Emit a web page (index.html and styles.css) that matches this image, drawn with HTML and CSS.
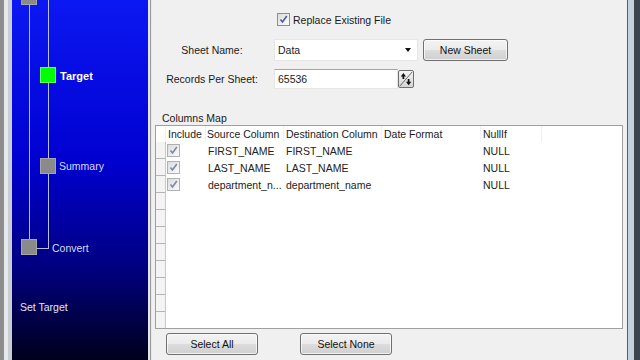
FILE: index.html
```html
<!DOCTYPE html>
<html lang="en">
<head>
  <meta charset="UTF-8" />
  <title>Export Wizard – Set Target</title>
  <link rel="stylesheet" href="styles.css">
</head>
<body>

  <div class="frame-left"></div>

  <!-- WIZARD STEPS -->
  <aside class="steps">
    <div class="line line-a"></div>
    <div class="line line-b"></div>
    <div class="line line-c"></div>
    <div class="step-box box-top"></div>
    <div class="step-box box-target current"></div>
    <div class="step-box box-summary"></div>
    <div class="step-box box-convert"></div>
    <span class="step-label lbl-target">Target</span>
    <span class="step-label lbl-summary">Summary</span>
    <span class="step-label lbl-convert">Convert</span>
    <span class="step-title">Set Target</span>
  </aside>

  <div class="splitter"></div>

  <main class="content">
    <div class="form">
      <div></div>
      <label class="check-row">
        <span class="chk"><svg viewBox="0 0 9 9"><path d="M1.5 4.5 L3.5 7 L7.8 1" /></svg></span>
        Replace Existing File
      </label>

      <span class="lbl">Sheet Name:</span>
      <div class="field-row">
        <div class="combo">Data<span class="arrow"></span></div>
        <button class="btn btn-sheet">New Sheet</button>
      </div>

      <span class="lbl">Records Per Sheet:</span>
      <div class="field-row">
        <div class="input">65536</div>
        <span class="spin">
          <svg viewBox="0 0 16 18">
            <path class="diag" d="M1 17 L15 1" />
            <path class="ar" d="M5 2 L8 6 L6 6 L6 9 L4 9 L4 6 L2 6 Z" />
            <path class="ar" d="M11 16 L8 12 L10 12 L10 9 L12 9 L12 12 L14 12 Z" />
          </svg>
        </span>
      </div>
    </div>

    <div class="map-title">Columns Map</div>
    <div class="grid">
      <div class="grid-head">
        <span class="c-gap"></span>
        <span class="c-inc">Include</span>
        <span class="c-src">Source Column</span>
        <span class="c-dst">Destination Column</span>
        <span class="c-fmt">Date Format</span>
        <span class="c-nul">NullIf</span>
        <span class="c-rest"></span>
      </div>
      <div class="grid-body">
        <div class="row-heads"></div>
        <div class="rows">
          <div class="row">
            <span class="c-inc"><span class="chk dim"><svg viewBox="0 0 9 9"><path d="M1.5 4.5 L3.5 7 L7.8 1" /></svg></span></span>
            <span class="c-src">FIRST_NAME</span>
            <span class="c-dst">FIRST_NAME</span>
            <span class="c-fmt"></span>
            <span class="c-nul">NULL</span>
          </div>
          <div class="row">
            <span class="c-inc"><span class="chk dim"><svg viewBox="0 0 9 9"><path d="M1.5 4.5 L3.5 7 L7.8 1" /></svg></span></span>
            <span class="c-src">LAST_NAME</span>
            <span class="c-dst">LAST_NAME</span>
            <span class="c-fmt"></span>
            <span class="c-nul">NULL</span>
          </div>
          <div class="row">
            <span class="c-inc"><span class="chk dim"><svg viewBox="0 0 9 9"><path d="M1.5 4.5 L3.5 7 L7.8 1" /></svg></span></span>
            <span class="c-src">department_n...</span>
            <span class="c-dst">department_name</span>
            <span class="c-fmt"></span>
            <span class="c-nul">NULL</span>
          </div>
        </div>
      </div>
    </div>

    <div class="actions">
      <button class="btn btn-wide">Select All</button>
      <button class="btn btn-wide">Select None</button>
    </div>
  </main>

  <div class="frame-right"></div>

</body>
</html>
```

FILE: styles.css
```css
/* RESET & GLOBAL */
* { margin: 0; padding: 0; box-sizing: border-box; }
body {
  width: 640px; height: 360px;
  display: flex;
  overflow: hidden;
  background: #f0f0f0;
  font-family: 'Liberation Sans', Arial, sans-serif;
  font-size: 10.5px;
  color: #1a1a1a;
}

/* WINDOW FRAME */
.frame-left {
  width: 12px; flex: none;
  background: linear-gradient(90deg, #8d8d8d 0 4px, #e6e9ec 4px 8px, #c9ced3 8px);
}
.frame-right {
  width: 13px; flex: none;
  background: linear-gradient(90deg, #5c5c5c 0 1px, #c3d3de 1px 7px, #3b4550 7px);
}
.splitter {
  width: 4px; flex: none;
  background: linear-gradient(90deg, #e4e6ee 0 2px, #9a9a9a 2px 3px, #e8e8e8 3px);
}

/* WIZARD STEPS (diagram) */
.steps {
  width: 136px; flex: none;
  position: relative;
  background: linear-gradient(180deg, #0c18f2 0%, #0000d0 45%, #00007e 75%, #00001c 100%);
  color: #fff;
}
.line { position: absolute; background: #b8bed8; }
.line-a { left: 17px; top: 0; width: 1px; height: 240px; }
.line-b { left: 36px; top: 0; width: 1px; height: 249px; }
.line-c { left: 24px; top: 248px; width: 13px; height: 1px; }
.step-box {
  position: absolute;
  width: 16px; height: 16px;
  background: #8a8a8a;
  border: 1px solid #a6a6a6;
}
.step-box.current { background: #00ff00; border-color: #66ff66; }
.box-top { left: 9px; top: -11px; }
.box-target { left: 28px; top: 67px; }
.box-summary { left: 28px; top: 158px; }
.box-convert { left: 9px; top: 239px; }
.step-label, .step-title {
  position: absolute;
  line-height: 12px;
  font-size: 10.5px;
  color: #d8dcf4;
}
.lbl-target { left: 48px; top: 70px; font-weight: bold; color: #fff; font-size: 11px; }
.lbl-summary { left: 47px; top: 160px; }
.lbl-convert { left: 40px; top: 242px; }
.step-title { left: 8px; top: 301px; color: #e4e6f0; }

/* CONTENT */
.content {
  flex: 1;
  padding: 13px 4px 0 3px;
  display: flex; flex-direction: column;
}
.form {
  display: grid;
  grid-template-columns: 94px 1fr;
  column-gap: 15px;
  padding-left: 10px;
  align-items: center;
}
.check-row {
  display: flex; align-items: center; gap: 3px;
  height: 13px;
  padding-left: 3px;
  margin-bottom: 13px;
}
.lbl { text-align: center; white-space: nowrap; }
.field-row { display: flex; align-items: center; gap: 5px; }
.form .field-row + .lbl, .form .field-row:last-child { margin-top: 8px; }

.chk {
  width: 13px; height: 13px; flex: none;
  border: 1px solid #8e8f8f;
  background: linear-gradient(135deg, #dcdcdc, #fbfbfb);
  display: inline-flex; align-items: center; justify-content: center;
}
.chk svg { width: 9px; height: 9px; }
.chk path { fill: none; stroke: #4a5f97; stroke-width: 1.6; }
.chk.dim { border-color: #b0b0b0; }
.chk.dim path { stroke: #7d87a8; }

.combo {
  width: 144px; height: 22px;
  background: #fff;
  border: 1px solid #e6e6e6;
  padding-left: 3px;
  display: flex; align-items: center; justify-content: space-between;
}
.arrow {
  width: 0; height: 0; margin-right: 6px;
  border-left: 3.5px solid transparent;
  border-right: 3.5px solid transparent;
  border-top: 4px solid #111;
}
.input {
  width: 124px; height: 20px;
  background: #fff;
  border: 1px solid #e6e6e6;
  border-top-color: #a4a4a4;
  padding-left: 3px;
  display: flex; align-items: center;
}
.spin {
  width: 16px; height: 18px; margin-left: -5px;
  border: 1px solid #6f6f6f; border-radius: 2px;
  background: linear-gradient(180deg, #f4f4f4, #d6d6d6);
}
.spin svg { width: 14px; height: 16px; display: block; }
.spin .diag { stroke: #555; stroke-width: 1; fill: none; }
.spin .ar { fill: #111; }

.btn {
  font: inherit; color: #111;
  height: 22px;
  border: 1px solid #707070; border-radius: 3px;
  background: linear-gradient(180deg, #f3f3f3 0%, #ebebeb 50%, #dddddd 51%, #cfcfcf 100%);
  box-shadow: inset 0 0 0 1px rgba(255,255,255,0.7);
}
.btn-sheet { width: 85px; }
.btn-wide { width: 92px; }

/* COLUMNS MAP GRID */
.map-title {
  margin-top: 23px;
  padding-left: 7px;
  line-height: 12px;
}
.grid {
  height: 204px;
  margin-top: 1px;
  border: 1px solid #a0a0a0;
  background: #fff;
  display: flex; flex-direction: column;
}
.grid-head, .row { display: flex; height: 17px; align-items: center; white-space: nowrap; }
.grid-head { height: 16px; }
.grid-head > span { height: 100%; display: flex; align-items: center; border-right: 1px solid #f0f0f0; }
.grid-head .c-rest { border-right: none; }
.c-gap { width: 10px; }
.c-inc { width: 40px; padding-left: 2px; }
.c-src { width: 78px; padding-left: 2px; overflow: hidden; }
.c-dst { width: 98px; padding-left: 2px; }
.c-fmt { width: 99px; padding-left: 2px; }
.c-nul { width: 61px; padding-left: 2px; }
.c-rest { flex: 1; }
.grid-head .c-inc { padding-left: 2px; }
.grid-head .c-src { padding-left: 1px; }
.row .c-inc { padding-left: 1px; }
.row { color: #222; }

.grid-body { flex: 1; display: flex; }
.row-heads {
  width: 10px;
  border-right: 1px solid #c8c8c8;
  background: repeating-linear-gradient(180deg, #f4f4f4 0 16px, #b4b4b4 16px 17px);
}
.rows { flex: 1; }

.actions {
  display: flex; gap: 42px;
  padding-left: 11px;
  margin-top: 4px;
}
```
